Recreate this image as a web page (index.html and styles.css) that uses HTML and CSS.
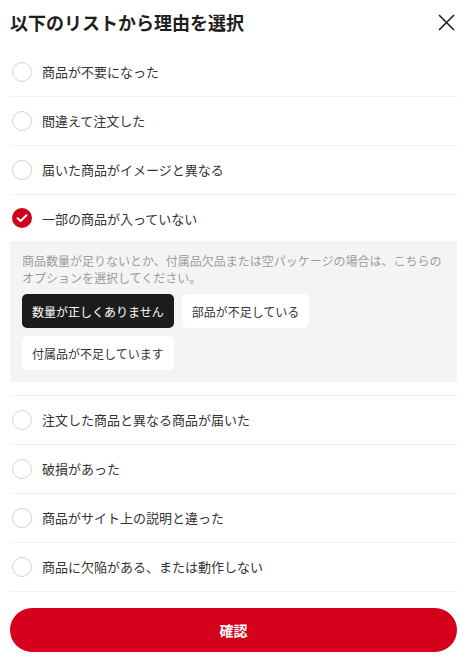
FILE: index.html
```html
<!DOCTYPE html>
<html lang="ja">
  <head>
    <meta charset="UTF-8" />
    <meta name="viewport" content="width=device-width, initial-scale=1.0" />
    <title>理由を選択</title>
    <link rel="stylesheet" href="styles.css">
  </head>
  <body>
    <div class="sheet">
      <div class="sheet-header">
        <h1 class="sheet-title">以下のリストから理由を選択</h1>
        <button class="close-btn" type="button" aria-label="閉じる">
          <svg width="17" height="17" viewBox="0 0 17 17">
            <path d="M1 1 L16 16 M16 1 L1 16" stroke="#222" stroke-width="1.6" fill="none" />
          </svg>
        </button>
      </div>

      <ul class="reason-list">
        <li class="reason">
          <div class="reason-row"><span class="radio"></span>商品が不要になった</div>
        </li>
        <li class="reason">
          <div class="reason-row"><span class="radio"></span>間違えて注文した</div>
        </li>
        <li class="reason">
          <div class="reason-row"><span class="radio"></span>届いた商品がイメージと異なる</div>
        </li>
        <li class="reason reason-active">
          <div class="reason-row">
            <span class="radio radio-checked">
              <svg width="20" height="20" viewBox="0 0 20 20">
                <path d="M5.6 10.2 L8.6 13 L14.4 7.2" stroke="#fff" stroke-width="2" fill="none" stroke-linecap="round" stroke-linejoin="round" />
              </svg>
            </span>
            一部の商品が入っていない
          </div>
          <div class="sub-panel">
            <p class="sub-desc">商品数量が足りないとか、付属品欠品または空パッケージの場合は、こちらのオプションを選択してください。</p>
            <div class="chips">
              <button class="chip chip-active" type="button">数量が正しくありません</button>
              <button class="chip" type="button">部品が不足している</button>
              <button class="chip" type="button">付属品が不足しています</button>
            </div>
          </div>
        </li>
        <li class="reason">
          <div class="reason-row"><span class="radio"></span>注文した商品と異なる商品が届いた</div>
        </li>
        <li class="reason">
          <div class="reason-row"><span class="radio"></span>破損があった</div>
        </li>
        <li class="reason">
          <div class="reason-row"><span class="radio"></span>商品がサイト上の説明と違った</div>
        </li>
        <li class="reason">
          <div class="reason-row"><span class="radio"></span>商品に欠陥がある、または動作しない</div>
        </li>
      </ul>

      <button class="confirm-btn" type="button">確認</button>
    </div>
  </body>
</html>
```

FILE: styles.css
```css
body {
  margin: 0;
  background-color: #FFFFFF;
  font-family: "Noto Sans CJK JP", "Noto Sans", sans-serif;
  color: #333;
}

.sheet {
  padding: 0 10px;
}

.sheet-header {
  display: flex;
  align-items: center;
  justify-content: space-between;
  height: 48px;
  padding-bottom: 4px;
  box-sizing: border-box;
}

.sheet-title {
  margin: 0;
  font-size: 18px;
  font-weight: 700;
  line-height: 24px;
  color: #1E1E1E;
}

.close-btn {
  display: flex;
  padding: 0;
  margin-right: 2px;
  border: 0;
  background: none;
  cursor: pointer;
}

.reason-list {
  list-style: none;
  margin: 0;
  padding: 0;
}

.reason {
  border-bottom: 1px solid #F0F0F0;
}

.reason-row {
  display: flex;
  align-items: center;
  gap: 10px;
  height: 47px;
  padding-bottom: 1px;
  padding-left: 2px;
  font-size: 13px;
  color: #333;
}

.radio {
  width: 20px;
  height: 20px;
  border: 1px solid #D4D4D4;
  border-radius: 50%;
  box-sizing: border-box;
  flex-shrink: 0;
}

.radio-checked {
  display: flex;
  border: 0;
  background-color: #D0021B;
}

.reason-active .reason-row {
  height: 46px;
  padding-bottom: 0;
}

.reason-active {
  padding-bottom: 13px;
}

.sub-panel {
  background-color: #F4F4F4;
  padding: 11px 12px 12px 12px;
}

.sub-desc {
  margin: 0 0 8px;
  font-size: 12px;
  line-height: 17px;
  color: #9C9C9C;
}

.chips {
  display: flex;
  flex-wrap: wrap;
  gap: 8px;
}

.chip {
  height: 34px;
  padding: 0 10px;
  border: 0;
  border-radius: 5px;
  background-color: #FFFFFF;
  font-family: inherit;
  font-size: 12px;
  color: #333;
  cursor: pointer;
}

.chip-active {
  background-color: #1C1C1C;
  color: #FFFFFF;
}

.confirm-btn {
  display: block;
  width: 100%;
  height: 44px;
  margin-top: 16px;
  border: 0;
  border-radius: 22px;
  background-color: #D5001C;
  color: #FFFFFF;
  font-family: inherit;
  font-size: 14px;
  font-weight: 700;
  cursor: pointer;
}
```
